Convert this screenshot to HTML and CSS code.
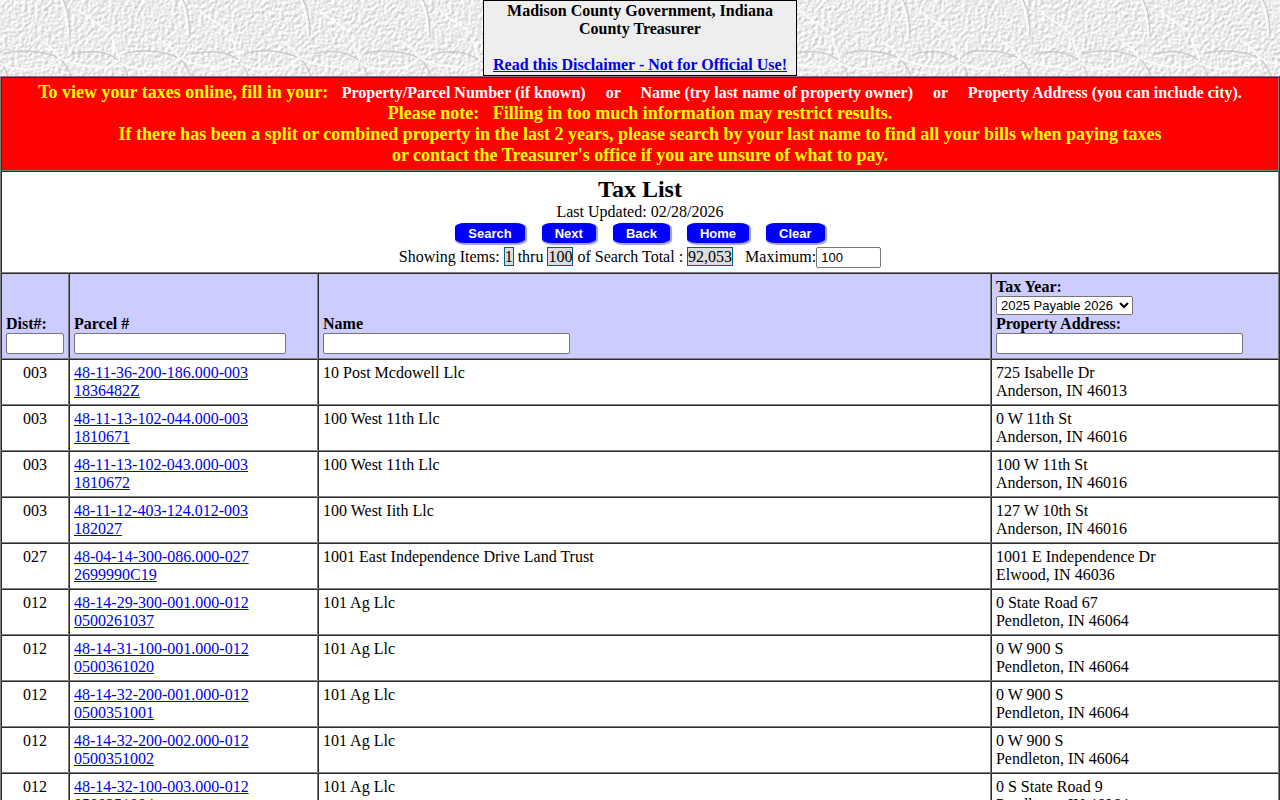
FILE: index.html
```html
<!DOCTYPE html>
<html lang="en">

<head>
    <meta charset="utf-8">
    <title>Tax List</title>
    <meta name="viewport" content="width=device-width, initial-scale=1">
    <link rel="stylesheet" href="styles.css">
</head>

<body>
    <header class="top">
        <!-- crumpled paper texture -->
        <svg class="paper" aria-hidden="true">
            <defs>
                <filter id="grain" x="0" y="0" width="100%" height="100%" color-interpolation-filters="sRGB">
                    <feTurbulence type="fractalNoise" baseFrequency="0.3" numOctaves="2" seed="4" result="n" />
                    <feDiffuseLighting in="n" surfaceScale="0.4" diffuseConstant="1.31" lighting-color="#ffffff">
                        <feDistantLight azimuth="225" elevation="45" />
                    </feDiffuseLighting>
                </filter>
                <pattern id="creases" width="120" height="120" patternUnits="userSpaceOnUse">
                    <g fill="none" stroke-linecap="round">
                        <g stroke="#c6c6c6" stroke-width="1.2">
                            <path d="M63 0C68 8 70 20 70 37" />
                            <path d="M4 54C18 49 42 50 59 58C64 62 68 68 71 76" />
                            <path d="M74 54C88 50 106 50 120 61" />
                            <path d="M0 61C4 66 7 72 8 77" />
                        </g>
                        <g stroke="#fcfcfc" stroke-width="1.8">
                            <path d="M61 0C65 8 67 20 68 35" />
                            <path d="M80 10C88 20 98 22 108 31" />
                            <path d="M42 42C50 46 56 52 59 58C52 66 40 69 26 69" />
                            <path d="M59 58C72 64 84 67 100 67" />
                            <path d="M112 38C114 46 117 54 120 60C114 64 108 68 102 68" />
                            <path d="M0 63C6 67 14 69 24 69" />
                        </g>
                    </g>
                </pattern>
            </defs>
            <rect width="100%" height="100%" filter="url(#grain)" />
            <rect width="100%" height="100%" fill="url(#creases)" />
        </svg>
        <div class="title_box">
            Madison County Government, Indiana<br>
            County Treasurer<br>
            <br>
            <a href="#disclaimer">Read this Disclaimer - Not for Official Use!</a>
        </div>
    </header>

    <form action="" id="frm">
        <table class="tax_list">
            <colgroup>
                <col class="col_dist">
                <col class="col_parcel">
                <col>
                <col class="col_address">
            </colgroup>
            <thead>
                <tr>
                    <td colspan="4" class="notice">
                        To view your taxes online, fill in your: &nbsp;
                        <span class="field">Property/Parcel Number (if known) &nbsp;&nbsp;&nbsp; or &nbsp;&nbsp;&nbsp; Name (try last name of property owner) &nbsp;&nbsp;&nbsp; or &nbsp;&nbsp;&nbsp; Property Address (you can include city).</span><br>
                        Please note: &nbsp; Filling in too much information may restrict results.<br>
                        If there has been a split or combined property in the last 2 years, please search by your last name to find all your bills when paying taxes<br>
                        or contact the Treasurer's office if you are unsure of what to pay.
                    </td>
                </tr>
                <tr>
                    <td colspan="4" class="search">
                        <h1>Tax List</h1>
                        <div>Last Updated: 02/28/2026</div>
                        <div class="buttons">
                            <button class="btn">Search</button>
                            <button type="button" class="btn">Next</button>
                            <button type="button" class="btn">Back</button>
                            <button type="button" class="btn">Home</button>
                            <button type="reset" class="btn">Clear</button>
                        </div>
                        <div class="showing">
                            Showing Items: <span class="count">1</span> thru <span class="count">100</span> of Search Total : <span class="count">92,053</span> &nbsp; <label for="maximum">Maximum:</label><input type="text" id="maximum" class="maximum" value="100">
                        </div>
                    </td>
                </tr>
                <tr class="filters">
                    <th><label for="dist">Dist#:</label><input type="text" id="dist" class="dist"></th>
                    <th><label for="parcel">Parcel #</label><input type="text" id="parcel" class="parcel"></th>
                    <th><label for="name">Name</label><input type="text" id="name" class="name"></th>
                    <th>
                        <label for="year">Tax Year:</label>
                        <select id="year">
                            <option>2025 Payable 2026</option>
                        </select>
                        <label for="address">Property Address:</label><input type="text" id="address" class="name">
                    </th>
                </tr>
            </thead>
            <tbody>
                <tr>
                    <td>003</td>
                    <td><a href="#1836482Z">48-11-36-200-186.000-003<br>1836482Z</a></td>
                    <td>10 Post Mcdowell Llc</td>
                    <td>725 Isabelle Dr<br>Anderson, IN 46013</td>
                </tr>
                <tr>
                    <td>003</td>
                    <td><a href="#1810671">48-11-13-102-044.000-003<br>1810671</a></td>
                    <td>100 West 11th Llc</td>
                    <td>0 W 11th St<br>Anderson, IN 46016</td>
                </tr>
                <tr>
                    <td>003</td>
                    <td><a href="#1810672">48-11-13-102-043.000-003<br>1810672</a></td>
                    <td>100 West 11th Llc</td>
                    <td>100 W 11th St<br>Anderson, IN 46016</td>
                </tr>
                <tr>
                    <td>003</td>
                    <td><a href="#182027">48-11-12-403-124.012-003<br>182027</a></td>
                    <td>100 West Iith Llc</td>
                    <td>127 W 10th St<br>Anderson, IN 46016</td>
                </tr>
                <tr>
                    <td>027</td>
                    <td><a href="#2699990C19">48-04-14-300-086.000-027<br>2699990C19</a></td>
                    <td>1001 East Independence Drive Land Trust</td>
                    <td>1001 E Independence Dr<br>Elwood, IN 46036</td>
                </tr>
                <tr>
                    <td>012</td>
                    <td><a href="#0500261037">48-14-29-300-001.000-012<br>0500261037</a></td>
                    <td>101 Ag Llc</td>
                    <td>0 State Road 67<br>Pendleton, IN 46064</td>
                </tr>
                <tr>
                    <td>012</td>
                    <td><a href="#0500361020">48-14-31-100-001.000-012<br>0500361020</a></td>
                    <td>101 Ag Llc</td>
                    <td>0 W 900 S<br>Pendleton, IN 46064</td>
                </tr>
                <tr>
                    <td>012</td>
                    <td><a href="#0500351001">48-14-32-200-001.000-012<br>0500351001</a></td>
                    <td>101 Ag Llc</td>
                    <td>0 W 900 S<br>Pendleton, IN 46064</td>
                </tr>
                <tr>
                    <td>012</td>
                    <td><a href="#0500351002">48-14-32-200-002.000-012<br>0500351002</a></td>
                    <td>101 Ag Llc</td>
                    <td>0 W 900 S<br>Pendleton, IN 46064</td>
                </tr>
                <tr>
                    <td>012</td>
                    <td><a href="#0500351004">48-14-32-100-003.000-012<br>0500351004</a></td>
                    <td>101 Ag Llc</td>
                    <td>0 S State Road 9<br>Pendleton, IN 46064</td>
                </tr>
            </tbody>
        </table>
    </form>
</body>

</html>
```

FILE: styles.css
```css
* {
    box-sizing: border-box;
}

html {
    scrollbar-width: none;
}

body {
    margin: 0;
    font-family: "Liberation Serif", "Times New Roman", serif;
    font-size: 16px;
    line-height: 18px;
    color: black;
}

a {
    color: #0000ee;
}

.top {
    position: relative;
    display: flex;
    justify-content: center;
    background-color: #ebebeb;
}

.paper {
    position: absolute;
    top: 0;
    left: 0;
    width: 100%;
    height: 100%;
}

.title_box {
    position: relative;
    padding: 1px 9px;
    border: 1px solid black;
    background-color: #eeeeee;
    text-align: center;
    font-weight: bold;
}

.tax_list {
    width: 100%;
    table-layout: fixed;
    border: 1px outset gray;
    border-spacing: 0;
    background-color: white;
}

.tax_list td,
.tax_list th {
    padding: 4px;
    border: 1px inset gray;
    text-align: left;
    vertical-align: top;
}

.col_dist {
    width: 68px;
}

.col_parcel {
    width: 249px;
}

.col_address {
    width: 288px;
}

.tax_list .notice {
    background-color: red;
    color: yellow;
    font-size: 18px;
    line-height: 21px;
    font-weight: bold;
    text-align: center;
}

.field {
    font-size: 16px;
    color: white;
}

.tax_list .search {
    text-align: center;
}

h1 {
    margin: 0;
    font-size: 24px;
    line-height: 27px;
}

.buttons {
    display: flex;
    justify-content: center;
    gap: 17px;
    margin-top: 2px;
}

.btn {
    height: 20px;
    padding: 0 13px;
    border: none;
    border-radius: 10px / 4px;
    box-shadow: 1px 1px 1px 1px #a0a0c8;
    background-color: blue;
    color: white;
    font-family: "Liberation Sans", Arial, sans-serif;
    font-size: 13px;
    font-weight: bold;
}

.showing {
    margin-top: 4px;
}

.count {
    border: 1px solid #006080;
    background-color: #dddddd;
}

input {
    height: 21px;
    padding: 1px 4px;
    border: 1px solid #767676;
    border-radius: 2px;
    font-family: "Liberation Sans", Arial, sans-serif;
    font-size: 13px;
}

.maximum {
    width: 65px;
}

.tax_list .filters th {
    background-color: #ccccff;
    vertical-align: bottom;
}

.filters label,
.filters input,
.filters select {
    display: block;
}

.dist {
    width: 58px;
}

.parcel {
    width: 212px;
}

.name {
    width: 247px;
}

select {
    width: 137px;
    height: 19px;
    font-family: "Liberation Sans", Arial, sans-serif;
    font-size: 13px;
}

tbody td:first-child {
    text-align: center;
}
```
